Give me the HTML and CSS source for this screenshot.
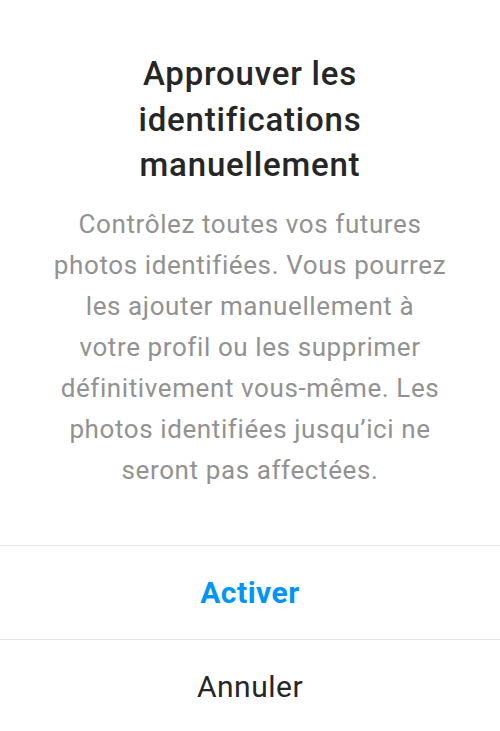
FILE: index.html
```html
<!DOCTYPE html>
<html lang="fr">
<head>
    <meta charset="UTF-8">
    <meta name="viewport" content="width=device-width, initial-scale=1.0">
    <title>Approuver les identifications manuellement</title>
    <link rel="stylesheet" href="styles.css">
</head>
<body>
    <div class="dialog">
        <div class="dialog-body">
            <h1 class="dialog-title">Approuver les<br>identifications<br>manuellement</h1>
            <p class="dialog-text">Contrôlez toutes vos futures<br>photos identifiées. Vous pourrez<br>les ajouter manuellement à<br>votre profil ou les supprimer<br>définitivement vous-même. Les<br>photos identifiées jusqu’ici ne<br>seront pas affectées.</p>
        </div>
        <button class="dialog-button primary">Activer</button>
        <button class="dialog-button">Annuler</button>
    </div>
</body>
</html>
```

FILE: styles.css
```css
body {
    font-family: Roboto, "Noto Sans", Arial, sans-serif;
    background-color: #fff;
    color: #262626;
    margin: 0;
}
.dialog {
    display: flex;
    flex-direction: column;
    background-color: #fff;
}
.dialog-body {
    padding: 51px 20px 54px;
    text-align: center;
}
.dialog-title {
    font-size: 33px;
    font-weight: 500;
    letter-spacing: 0.8px;
    line-height: 45.5px;
    margin: 0 0 16px;
    color: #262626;
}
.dialog-text {
    font-size: 26px;
    letter-spacing: 0.6px;
    line-height: 41px;
    margin: 0;
    color: #929292;
}
.dialog-button {
    font-family: inherit;
    font-size: 30px;
    letter-spacing: 0.5px;
    color: #262626;
    background: none;
    border: none;
    border-top: 1px solid #e6e6e6;
    height: 94px;
    padding: 0;
    width: 100%;
    cursor: pointer;
}
.dialog-button.primary {
    color: #0095f6;
    font-weight: 700;
}
```
